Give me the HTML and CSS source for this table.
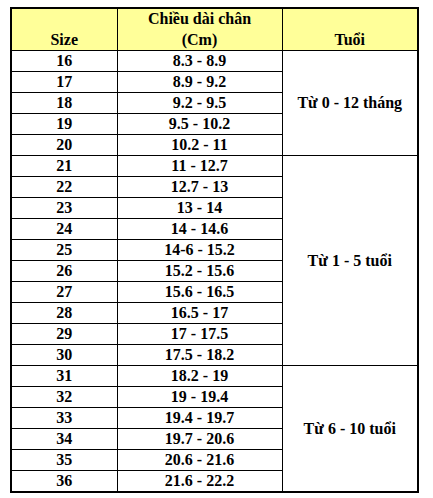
FILE: index.html
```html
<!DOCTYPE html>
<html>
<head>
<meta charset="utf-8">
<link rel="stylesheet" href="styles.css">
</head>
<body>
<div class="sheet">
<table class="size-table">
<colgroup><col class="c-size"><col class="c-len"><col class="c-age"></colgroup>
<thead>
<tr class="head"><th>Size</th><th>Chiều dài chân<br>(Cm)</th><th>Tuổi</th></tr>
</thead>
<tbody>
<tr><td>16</td><td>8.3 - 8.9</td><td class="age" rowspan="5">Từ 0 - 12 tháng</td></tr>
<tr><td>17</td><td>8.9 - 9.2</td></tr>
<tr><td>18</td><td>9.2 - 9.5</td></tr>
<tr><td>19</td><td>9.5 - 10.2</td></tr>
<tr><td>20</td><td>10.2 - 11</td></tr>
<tr><td>21</td><td>11 - 12.7</td><td class="age" rowspan="10">Từ 1 - 5 tuổi</td></tr>
<tr><td>22</td><td>12.7 - 13</td></tr>
<tr><td>23</td><td>13 - 14</td></tr>
<tr><td>24</td><td>14 - 14.6</td></tr>
<tr><td>25</td><td>14-6 - 15.2</td></tr>
<tr><td>26</td><td>15.2 - 15.6</td></tr>
<tr><td>27</td><td>15.6 - 16.5</td></tr>
<tr><td>28</td><td>16.5 - 17</td></tr>
<tr><td>29</td><td>17 - 17.5</td></tr>
<tr><td>30</td><td>17.5 - 18.2</td></tr>
<tr><td>31</td><td>18.2 - 19</td><td class="age" rowspan="6">Từ 6 - 10 tuổi</td></tr>
<tr><td>32</td><td>19 - 19.4</td></tr>
<tr><td>33</td><td>19.4 - 19.7</td></tr>
<tr><td>34</td><td>19.7 - 20.6</td></tr>
<tr><td>35</td><td>20.6 - 21.6</td></tr>
<tr class="last"><td>36</td><td>21.6 - 22.2</td></tr>
</tbody>
</table>
</div>
</body>
</html>
```
FILE: styles.css
```css
html, body {
  margin: 0;
  padding: 0;
  background: #ffffff;
}

body {
  font-family: "Liberation Serif";
  font-weight: bold;
  font-size: 16px;
  color: #000000;
}

.sheet {
  display: inline-block;
  margin: 7px 0 0 10px;
  border: 2px solid #000000;
}

.size-table {
  border-collapse: collapse;
  border-style: hidden;
  table-layout: fixed;
  width: 405px;
}

.c-size { width: 105px; }
.c-len { width: 165px; }
.c-age { width: 135px; }

.size-table th,
.size-table td {
  font-family: "Liberation Serif";
  border: 1px solid #000000;
  padding: 0;
  text-align: center;
  vertical-align: bottom;
  line-height: 20px;
  height: 20px;
  white-space: nowrap;
  font-weight: bold;
}

.size-table .head th {
  background: #ffff99;
  height: 40px;
  line-height: 20.5px;
}

.size-table td.age {
  vertical-align: middle;
}

.size-table tr.last td {
  height: 19px;
}
```
